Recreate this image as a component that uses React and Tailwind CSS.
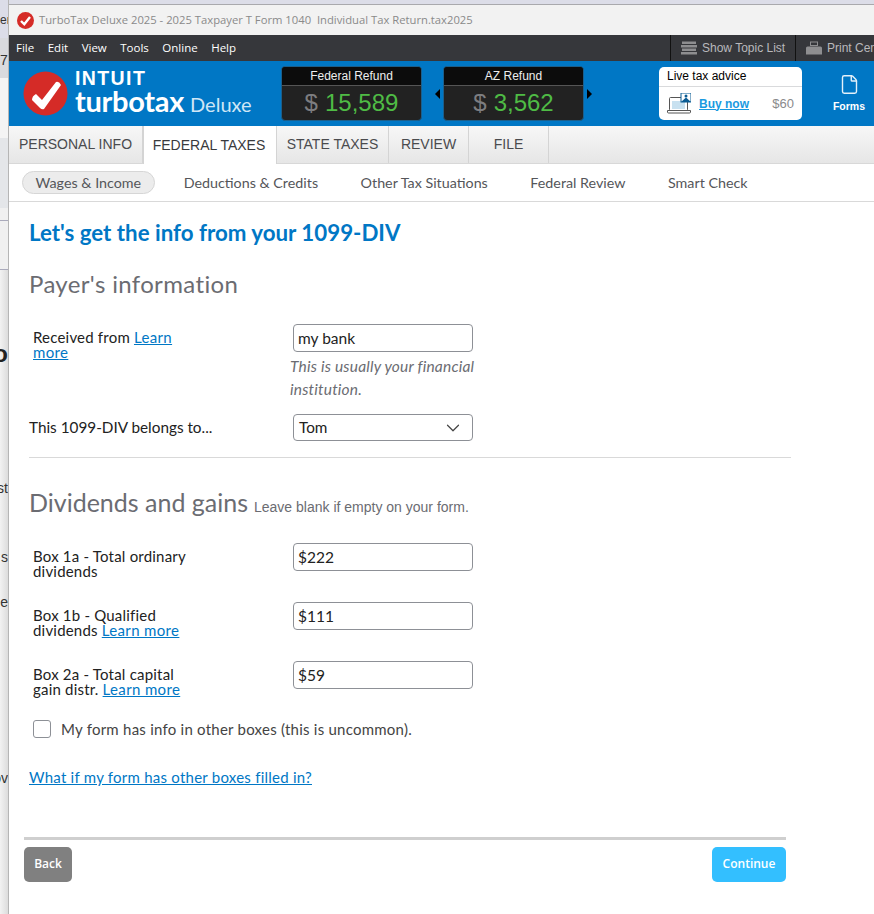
import React from 'react';
import { ChevronDown, File } from 'lucide-react';

const body = "font-['Lato','Noto_Sans',sans-serif]";
const arial = "font-['Liberation_Sans',Arial,sans-serif]";
const ui = "font-['Open_Sans','Noto_Sans',sans-serif]";

const tabs = [
  { label: 'PERSONAL INFO', w: 'w-[134px]' },
  { label: 'FEDERAL TAXES', w: 'w-[134px]', active: true },
  { label: 'STATE TAXES', w: 'w-[112px]' },
  { label: 'REVIEW', w: 'w-[80px]' },
  { label: 'FILE', w: 'w-[80px]' },
];

const steps = ['Deductions & Credits', 'Other Tax Situations', 'Federal Review', 'Smart Check'];

const LearnMore = ({ children = 'Learn more' }) => (
  <a className="text-[#0077c5] underline tracking-[0.35px]" href="#">{children}</a>
);

const RefundBox = ({ title, amount }) => (
  <div className="w-[141px] h-[55px] rounded-[4px] border border-[#1b5f8c] bg-[#222] overflow-hidden flex flex-col">
    <div className={`${arial} h-[19px] shrink-0 bg-[#0c0c0c] border-b border-[#555] text-[12px] leading-[18px] text-center text-[#eee]`}>
      {title}
    </div>
    <div className={`${arial} flex-1 flex items-center justify-center gap-[7px] text-[24px] leading-none`}>
      <span className="text-[#7d7d80]">$</span>
      <span className="text-[#4fbb45]">{amount}</span>
    </div>
  </div>
);

const Logo = () => (
  <div className="flex items-center w-[258px] pl-[14px] gap-[7px]">
    <svg width="45" height="45" viewBox="0 0 45 45" className="shrink-0">
      <circle cx="22.5" cy="22.5" r="22" fill="#d52b27" />
      <path d="M13 23 L19 29 L33 11 Q36 10 38 14 L21 38 Q19 39 17 37 L9 29 Q9 25 13 23Z" fill="#fff" />
    </svg>
    <div className="flex flex-col text-white">
      <span className={`${arial} font-bold text-[19.5px] leading-[20px] tracking-[1.4px] -mt-[1px]`}>INTUIT</span>
      <div className="flex items-baseline gap-[6px] -mt-[1px]">
        <span className={`${body} font-bold text-[29px] leading-[27px] tracking-[-0.3px]`}>turbotax</span>
        <span className={`${body} text-[20px] leading-[27px] text-[#cfe6f6]`}>Deluxe</span>
      </div>
    </div>
  </div>
);

const LaptopIcon = () => (
  <svg width="24" height="21" viewBox="0 0 24 21" className="shrink-0">
    <rect x="2.5" y="4.5" width="18" height="13" rx="1" fill="#fff" stroke="#555" />
    <rect x="5" y="8" width="13" height="8" fill="#c8e1f0" />
    <path d="M0.5 17.5 H23.5 V19 Q23.5 20 22.5 20 H1.5 Q0.5 20 0.5 19 Z" fill="#fff" stroke="#555" />
    <rect x="14" y="0" width="10" height="9" fill="#fff" stroke="#0a5c94" />
    <path d="M14 9 L19 4.5 L24 9 Z" fill="#0a5c94" />
    <circle cx="19" cy="3" r="1.5" fill="#0a5c94" />
  </svg>
);

const FieldRow = ({ label, value, className = '' }) => (
  <div className={`flex items-start h-[28px] ${className}`}>
    <div className="w-[264px] pl-[4px] pr-[98px] pt-[6px] text-[15px] tracking-[0.2px] leading-[15px] text-[#222]">{label}</div>
    <div className="w-[180px] h-[28px] shrink-0 border border-[#8d9096] rounded-[4px] px-[4px] text-[15.5px] leading-[26px] text-[#222] bg-white">
      {value}
    </div>
  </div>
);

const LeftEdge = () => (
  <div className={`${arial} w-[9px] shrink-0 overflow-hidden flex flex-col bg-gradient-to-r from-[#f2f2f2] to-[#dcdcdc] text-[14px] text-[#333] border-r border-[#b5b5b5]`}>
    <div className="h-[38px] shrink-0 bg-[#dcdde8] text-right leading-[38px] pt-[1px] text-[12px]">en</div>
    <div className="h-[40px] shrink-0 bg-[#d9dade] text-right leading-[44px] text-[14px]">76</div>
    <div className="h-[60px] shrink-0 bg-[#f4f4f4]" />
    <div className="h-[70px] shrink-0 bg-[#e4e6e9]" />
    <div className="h-[13px] shrink-0 bg-[#f0f0f0] border-b border-[#aab]" />
    <div className="h-[49px] shrink-0 bg-[#f0f0f0] border-b border-[#aab]" />
    <div className="h-[97px] shrink-0 flex items-end justify-end text-[24px] font-bold leading-[26px] text-[#222]">o</div>
    <div className="h-[131px] shrink-0 flex items-end justify-end leading-[20px]">st</div>
    <div className="h-[69px] shrink-0 flex items-end justify-end leading-[20px]">s</div>
    <div className="h-[45px] shrink-0 flex items-end justify-end leading-[20px]">ee</div>
    <div className="h-[176px] shrink-0 flex items-end justify-end leading-[20px]">ov</div>
    <div className="flex-1" />
  </div>
);

export default function App() {
  return (
    <div className="h-[914px] w-[874px] flex overflow-hidden bg-white">
      <LeftEdge />
      <div className="flex-1 min-w-0 flex flex-col">
        <div className="h-[5px] shrink-0 bg-[#dcdde8] border-b border-[#a9a9ad]" />

        {/* title bar */}
        <div className="h-[30px] shrink-0 bg-[#f2f2f2] flex items-center pl-[8px] gap-[5px]">
          <svg width="17" height="17" viewBox="0 0 17 17" className="shrink-0">
            <circle cx="8.5" cy="8.5" r="8.5" fill="#d52b27" />
            <path d="M4 9 L7.3 12.3 L13 5" fill="none" stroke="#fff" strokeWidth="2.4" />
          </svg>
          <span className={`${ui} text-[11.25px] text-[#8a8a8a] whitespace-pre`}>TurboTax Deluxe 2025 - 2025 Taxpayer T Form 1040  Individual Tax Return.tax2025</span>
        </div>

        {/* menu bar */}
        <div className="h-[26px] shrink-0 bg-[#36373b] flex items-stretch overflow-hidden">
          <div className={`${ui} w-[661px] shrink-0 flex items-center pl-[7px] gap-[13.5px] text-[11.5px] text-white`}>
            <span>File</span><span>Edit</span><span>View</span><span>Tools</span><span>Online</span><span>Help</span>
          </div>
          <div className={`${arial} w-[125px] shrink-0 border-l border-[#111] flex items-center pl-[10px] gap-[5px] text-[12px] text-[#b9b9bb] whitespace-nowrap`}>
            <svg width="16" height="14" viewBox="0 0 16 14" className="shrink-0">
              <path d="M1 0.5h14v2.5H1zM0 4h16v2.5H0zM1 7.5h14V10H1zM0 11h16v2.5H0z" fill="#8e8e90" />
            </svg>
            Show Topic List
          </div>
          <div className={`${arial} flex-1 border-l border-[#111] flex items-center pl-[10px] gap-[5px] text-[12px] text-[#b9b9bb] whitespace-nowrap`}>
            <svg width="16" height="14" viewBox="0 0 16 14" className="shrink-0">
              <path d="M4 0.5h8V5H4zM5 1.5v2.5h6V1.5z" fill="#8e8e90" fillRule="evenodd" />
              <path d="M1.5 5.5h13Q16 5.5 16 7v6.5H0V7Q0 5.5 1.5 5.5z" fill="#8e8e90" />
            </svg>
            Print Center
          </div>
        </div>

        {/* brand bar */}
        <div className="h-[65px] shrink-0 bg-[#0077c5] flex items-center">
          <Logo />
          <div className="ml-[14px]"><RefundBox title="Federal Refund" amount="15,589" /></div>
          <div className="w-[21px] flex justify-end pr-[3px]">
            <span className="border-y-[5px] border-y-transparent border-r-[5px] border-r-black" />
          </div>
          <div><RefundBox title="AZ Refund" amount="3,562" /></div>
          <div className="w-[8px] flex justify-end">
            <span className="border-y-[5px] border-y-transparent border-l-[5px] border-l-black" />
          </div>
          <div className="ml-[67px] w-[143px] h-[53px] rounded-[5px] bg-white flex flex-col overflow-hidden">
            <div className={`${arial} h-[20px] shrink-0 border-b border-[#d9dadc] pl-[8px] text-[12px] leading-[19px] text-black`}>Live tax advice</div>
            <div className={`${arial} flex-1 flex items-center pl-[8px] pr-[8px]`}>
              <LaptopIcon />
              <a href="#" className="ml-[8px] text-[12px] font-bold text-[#1a9ae0] underline">Buy now</a>
              <span className="ml-auto text-[13px] text-[#8a8a8c]">$60</span>
            </div>
          </div>
          <div className={`${arial} ml-[25px] w-[44px] flex flex-col items-center text-white`}>
            <File size={21} strokeWidth={1.6} className="text-[#e4f1fa]" />
            <span className="mt-[5px] text-[10.5px] font-bold leading-[13px]">Forms</span>
          </div>
        </div>

        {/* tabs */}
        <div className={`${arial} h-[38px] shrink-0 flex bg-gradient-to-b from-[#f7f7f7] to-[#e6e6e6] border-b border-[#d8d8d8]`}>
          {tabs.map((t) => (
            <div
              key={t.label}
              className={`${t.w} shrink-0 text-center text-[14px] border-r border-[#d4d4d4] ${
                t.active ? 'bg-white text-[#393a3d] leading-[39px] -mb-[1px] border-l border-l-[#d4d4d4] pr-[2px]' : 'text-[#4a4b4e] leading-[36px]'
              }`}
            >
              {t.label}
            </div>
          ))}
        </div>

        {/* step nav */}
        <div className={`${body} h-[38px] shrink-0 border-b border-[#d9d9d9] flex items-center pl-[13px] text-[14.3px] text-[#55565a]`}>
          <span className="h-[23px] leading-[21px] px-[12.5px] rounded-full bg-[#ececec] border border-[#d6d6d6]">Wages &amp; Income</span>
          <div className="flex ml-[29px] gap-[42.5px]">
            {steps.map((s) => <span key={s}>{s}</span>)}
          </div>
        </div>

        {/* form */}
        <div className={`${body} flex-1 flex flex-col pl-[20px] w-[782px]`}>
          <h1 className="mt-[17px] text-[22.3px] leading-[28px] font-bold text-[#0077c5]">Let's get the info from your 1099-DIV</h1>
          <h2 className="mt-[22px] text-[24px] tracking-[0.35px] leading-[30px] text-[#6b6c72]">Payer's information</h2>

          <FieldRow
            className="mt-[25px]"
            label={<>Received from <LearnMore /></>}
            value="my bank"
          />
          <div className="ml-[261px] mt-[3px] w-[200px] italic text-[15.5px] tracking-[0.2px] leading-[23px] text-[#6b6c72]">
            This is usually your financial institution.
          </div>

          <div className="flex items-center mt-[13px] text-[15.3px] text-[#222]">
            <div className="w-[264px]">This 1099-DIV belongs to...</div>
            <div className="w-[180px] h-[27px] border border-[#8d9096] rounded-[4px] pl-[5px] pr-[8px] flex items-center justify-between">
              Tom
              <ChevronDown size={22} strokeWidth={1.3} className="text-[#444]" />
            </div>
          </div>

          <div className="mt-[16px] border-t border-[#d9d9d9]" />

          <div className="mt-[28px] flex items-baseline gap-[6px]">
            <h2 className="text-[25px] leading-[32px] text-[#6b6c72]">Dividends and gains</h2>
            <span className={`${arial} text-[14px] text-[#6b6c72]`}>Leave blank if empty on your form.</span>
          </div>

          <FieldRow className="mt-[25px]" label="Box 1a - Total ordinary dividends" value="$222" />
          <FieldRow className="mt-[31px]" label={<>Box 1b - Qualified dividends <LearnMore /></>} value="$111" />
          <FieldRow className="mt-[31px]" label={<>Box 2a - Total capital gain distr. <LearnMore /></>} value="$59" />

          <label className="mt-[29px] ml-[4px] flex items-center gap-[10px] text-[15px] tracking-[0.24px] text-[#444]">
            <span className="w-[18px] h-[18px] rounded-[3px] border border-[#8d9096] bg-white shrink-0" />
            My form has info in other boxes (this is uncommon).
          </label>

          <a href="#" className="mt-[26px] text-[15px] tracking-[0.24px] leading-[20px] text-[#0077c5] underline">What if my form has other boxes filled in?</a>

          <div className={`${ui} -ml-[5px] w-[762px] mt-[50px] border-t-[3px] border-[#cfcfcf] pt-[7px] flex justify-between text-[12px] font-semibold text-white`}>
            <button className="w-[48px] h-[35px] rounded-[5px] bg-[#808080]">Back</button>
            <button className="w-[74px] h-[35px] rounded-[5px] bg-[#33bfff]">Continue</button>
          </div>
        </div>
      </div>
    </div>
  );
}
